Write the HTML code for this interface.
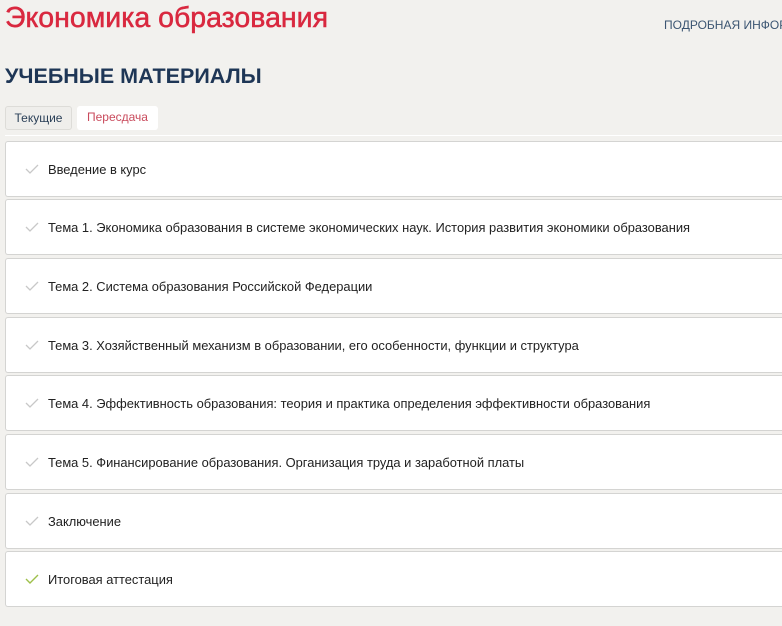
<!DOCTYPE html>
<html><head><meta charset="utf-8"><style>
body{margin:0;width:782px;height:626px;overflow:hidden;background:#f2f1ee;font-family:"Liberation Sans","DejaVu Sans",sans-serif;position:relative}
.t{position:absolute;left:5px;top:2px;font-size:28.5px;color:#d9283f;white-space:nowrap;-webkit-text-stroke:0.5px #d9283f}
.info{position:absolute;left:664px;top:18px;width:118px;overflow:hidden;font-size:12px;color:#3b5572;white-space:nowrap}
.h{position:absolute;left:5px;top:64px;font-size:21.5px;font-weight:bold;color:#1e3656;white-space:nowrap}
.tab{position:absolute;top:106px;height:24px;line-height:23px;font-size:12px;box-sizing:border-box;border-radius:3px;text-align:center}
.line{position:absolute;left:5px;right:0;top:135px;height:1px;background:#fff}
.c{position:absolute;left:5px;width:777px;height:56px;background:#fff;border:1px solid #d4d4d2;border-right:none;border-radius:3px 0 0 3px;box-sizing:border-box;overflow:hidden}
.c span{position:absolute;left:42px;top:20px;font-size:12.9px;color:#222;white-space:nowrap}
.c svg{position:absolute;left:19px;top:22px}
</style></head><body>
<div class="t">Экономика образования</div>
<div class="info">ПОДРОБНАЯ ИНФОРМАЦИЯ</div>
<div class="h">УЧЕБНЫЕ МАТЕРИАЛЫ</div>
<div class="tab" style="left:5px;width:67px;background:#efeeeb;border:1px solid #dddcd8;color:#2a3f57">Текущие</div>
<div class="tab" style="left:77px;width:81px;background:#fff;color:#c94a5c">Пересдача</div>
<div class="line"></div>
<div class="c" style="top:141px"><svg width="14" height="10"><path d="M1 5 L5 9 L13 1" stroke="#c8c8c8" stroke-width="1.3" fill="none"/></svg><span>Введение в курс</span></div>
<div class="c" style="top:199px"><svg width="14" height="10"><path d="M1 5 L5 9 L13 1" stroke="#c8c8c8" stroke-width="1.3" fill="none"/></svg><span>Тема 1. Экономика образования в системе экономических наук. История развития экономики образования</span></div>
<div class="c" style="top:258px"><svg width="14" height="10"><path d="M1 5 L5 9 L13 1" stroke="#c8c8c8" stroke-width="1.3" fill="none"/></svg><span>Тема 2. Система образования Российской Федерации</span></div>
<div class="c" style="top:317px"><svg width="14" height="10"><path d="M1 5 L5 9 L13 1" stroke="#c8c8c8" stroke-width="1.3" fill="none"/></svg><span>Тема 3. Хозяйственный механизм в образовании, его особенности, функции и структура</span></div>
<div class="c" style="top:375px"><svg width="14" height="10"><path d="M1 5 L5 9 L13 1" stroke="#c8c8c8" stroke-width="1.3" fill="none"/></svg><span>Тема 4. Эффективность образования: теория и практика определения эффективности образования</span></div>
<div class="c" style="top:434px"><svg width="14" height="10"><path d="M1 5 L5 9 L13 1" stroke="#c8c8c8" stroke-width="1.3" fill="none"/></svg><span>Тема 5. Финансирование образования. Организация труда и заработной платы</span></div>
<div class="c" style="top:493px"><svg width="14" height="10"><path d="M1 5 L5 9 L13 1" stroke="#c8c8c8" stroke-width="1.3" fill="none"/></svg><span>Заключение</span></div>
<div class="c" style="top:551px"><svg width="14" height="10"><path d="M1 5 L5 9 L13 1" stroke="#9ec04a" stroke-width="1.4" fill="none"/></svg><span>Итоговая аттестация</span></div>
</body></html>
